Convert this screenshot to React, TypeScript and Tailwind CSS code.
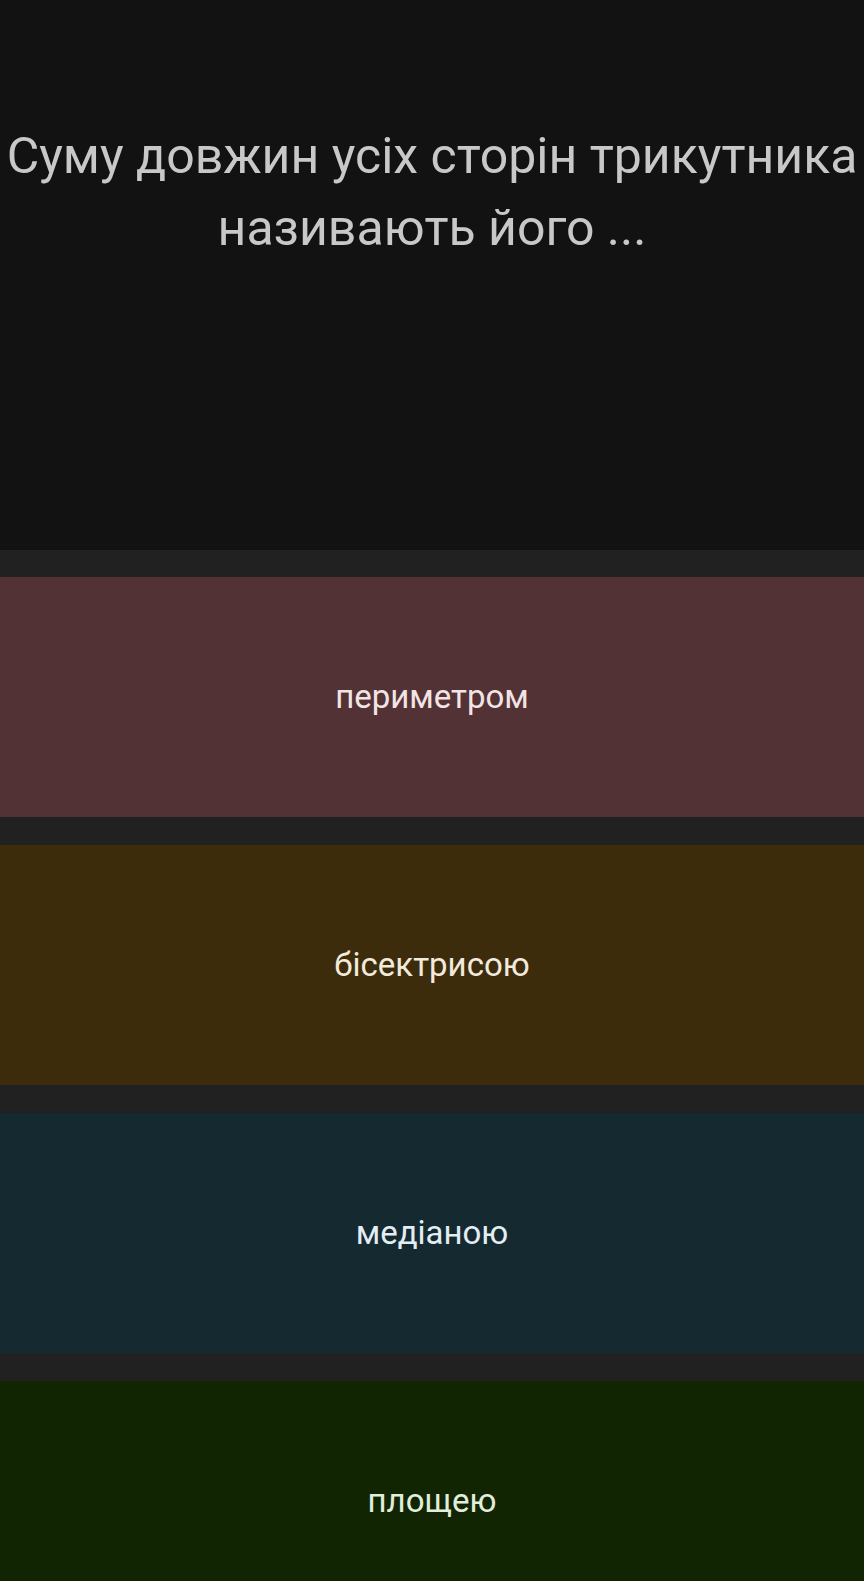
const answers = [
  { label: "периметром", bg: "bg-[#523235]", text: "text-[#f2e4e4]" },
  { label: "бісектрисою", bg: "bg-[#3c2c0c]", text: "text-[#f2eadc]" },
  { label: "медіаною", bg: "bg-[#152931]", text: "text-[#e2eef4]" },
  { label: "площею", bg: "bg-[#122503]", text: "text-[#e2eedc]" },
];

export default function App() {
  return (
    <div className="flex flex-col h-[1581px] overflow-hidden bg-[#212121] w-full font-['Roboto',sans-serif]">
      {/* Питання */}
      <div className="h-[550px] shrink-0 bg-[#121212] pt-[120px]">
        <h1 className="text-center text-[50px] leading-[72px] text-[#c8c8c8]">
          Суму довжин усіх сторін трикутника називають його ...
        </h1>
      </div>

      {/* Варіанти відповіді */}
      <div className="flex flex-col gap-[28px] pt-[27px]">
        {answers.map(({ label, bg, text }) => (
          <div
            key={label}
            className={`h-[240px] shrink-0 flex items-center justify-center cursor-pointer ${bg}`}
          >
            <p className={`text-[33px] ${text}`}>{label}</p>
          </div>
        ))}
      </div>
    </div>
  );
}
